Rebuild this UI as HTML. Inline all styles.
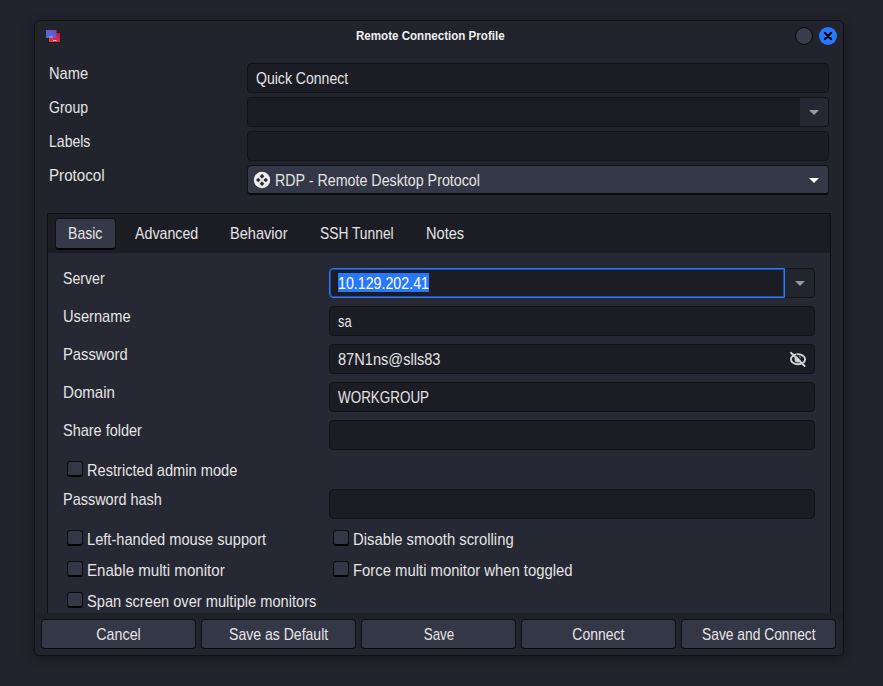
<!DOCTYPE html>
<html><head><meta charset="utf-8">
<style>
*{box-sizing:border-box;margin:0;padding:0}
html,body{width:883px;height:686px;overflow:hidden;background:#22242d;font-family:"Liberation Sans",sans-serif;font-size:15.75px;color:#e6e6e6}
.abs{position:absolute}
#dlg{position:absolute;left:34px;top:20px;width:810px;height:636px;background:#22242d;border:1px solid #101114;border-radius:6px 6px 5px 5px;box-shadow:0 2px 12px 1px rgba(0,0,0,0.32)}
.title{position:absolute;left:0;top:28px;width:883px;text-align:center;font-weight:bold;font-size:12px;color:#f0f0f0}
.lbl{position:absolute;white-space:nowrap;color:#e4e4e4;transform-origin:left center}
.entry{position:absolute;background:#1c1d24;border:1px solid #121317;border-radius:4px}
.combo{position:absolute;background:#343746;border:1px solid #121317;border-bottom:2px solid #08090b;border-radius:4px}
.tri{position:absolute;width:0;height:0;border-left:6px solid transparent;border-right:6px solid transparent;border-top:6px solid #fff}
.btn{position:absolute;top:619px;height:30px;width:155px;background:#343746;border:1px solid #111216;border-bottom-color:#08090a;border-radius:4px;text-align:center;line-height:27px}
.chk{position:absolute;width:16px;height:16px;background:#343746;border:1px solid #0b0c0f;border-bottom:2px solid #030304;border-radius:3px}
</style></head><body>
<div id="dlg"></div>
<!-- title bar -->
<svg class="abs" style="left:44px;top:28px" width="18" height="16" viewBox="0 0 18 16">
<defs><linearGradient id="g1" x1="0" y1="1" x2="1" y2="0"><stop offset="0" stop-color="#3b76fb"/><stop offset="1" stop-color="#8548a8"/></linearGradient>
<linearGradient id="g2" x1="0" y1="1" x2="1" y2="0"><stop offset="0" stop-color="#fb3a3c"/><stop offset="1" stop-color="#c40f4c"/></linearGradient></defs>
<rect x="4.5" y="4.5" width="12" height="10" fill="none" stroke="rgba(0,0,0,0.25)" stroke-width="1"/>
<rect x="5" y="5" width="11" height="9" fill="url(#g2)"/>
<rect x="9" y="12" width="3.5" height="1" fill="#f4d0d8"/>
<rect x="2" y="2" width="10.5" height="8" fill="url(#g1)"/>
<rect x="5.5" y="8.3" width="3" height="1.2" fill="#a8b4e8"/>
</svg>
<div id="t_title" class="title" style="left:356px;width:auto;text-align:left;top:29px;transform:scaleX(0.965);transform-origin:left">Remote Connection Profile</div>
<div class="abs" style="left:795px;top:27px;width:18px;height:18px;border-radius:50%;background:#393c4a;border:1.2px solid #060608"></div>
<div class="abs" style="left:819px;top:27px;width:18px;height:18px;border-radius:50%;background:#2777ff"></div>
<svg class="abs" style="left:819px;top:27px" width="18" height="18" viewBox="0 0 18 18"><path d="M6 6L12 12M12 6L6 12" stroke="#000" stroke-width="2.3" stroke-linecap="round"/></svg>

<!-- top fields -->
<div id="t_name" class="lbl" style="left:49px;top:64px;transform:translateY(0.5px) scaleX(0.931)">Name</div>
<div id="t_group" class="lbl" style="left:49px;top:98px;transform:translateY(0.5px) scaleX(0.891)">Group</div>
<div id="t_labels" class="lbl" style="left:49px;top:132px;transform:translateY(0.5px) scaleX(0.892)">Labels</div>
<div id="t_protocol" class="lbl" style="left:49px;top:166px;transform:translateY(0.5px) scaleX(0.961)">Protocol</div>

<div class="entry" style="left:247px;top:63px;width:582px;height:30px"></div>
<div id="t_quick" class="lbl" style="left:256px;top:69px;transform:translateY(0.5px) scaleX(0.892)">Quick Connect</div>
<div class="entry" style="left:247px;top:97px;width:582px;height:30px;background:#252733"></div>
<div class="abs" style="left:248px;top:98px;width:552px;height:28px;background:#1c1d24;border-radius:3px 0 0 3px"></div>
<div class="tri" style="left:809px;top:110px;border-top-color:#9a9a9a;border-left-width:5px;border-right-width:5px;border-top-width:5px"></div>
<div class="entry" style="left:247px;top:131px;width:582px;height:30px"></div>
<div class="combo" style="left:247px;top:165px;width:582px;height:30px"></div>
<svg class="abs" style="left:253px;top:171px" width="18" height="18" viewBox="0 0 18 18">
<circle cx="9" cy="9" r="8.2" fill="#eeeeee"/>
<g fill="#2c2e38"><rect x="7.30" y="3.60" width="3.40" height="3.40" rx="0.4" transform="rotate(45 9.00 5.30)"/><rect x="7.30" y="11.00" width="3.40" height="3.40" rx="0.4" transform="rotate(45 9.00 12.70)"/><rect x="3.60" y="7.30" width="3.40" height="3.40" rx="0.4" transform="rotate(45 5.30 9.00)"/><rect x="11.00" y="7.30" width="3.40" height="3.40" rx="0.4" transform="rotate(45 12.70 9.00)"/></g>
</svg>
<div id="t_rdp" class="lbl" style="left:275px;top:171px;transform:translateY(0.5px) scaleX(0.905)">RDP - Remote Desktop Protocol</div>
<div class="tri" style="left:809px;top:178px;border-left-width:5px;border-right-width:5px;border-top-width:5px"></div>

<!-- notebook -->
<div class="abs" style="left:47px;top:213px;width:784px;height:400px;background:#262833;border:1px solid #0f1013;border-bottom:none"></div>
<div class="abs" style="left:48px;top:214px;width:782px;height:39px;background:#1c1d24"></div>
<div class="abs" style="left:55px;top:218px;width:61px;height:32px;background:#353847;border-radius:4px;border:1px solid #121317;border-bottom:2px solid #040405"></div>
<div id="t_basic" class="lbl" style="left:68px;top:224px;transform:translateY(0.5px) scaleX(0.893)">Basic</div>
<div id="t_adv" class="lbl" style="left:135px;top:224px;transform:translateY(0.5px) scaleX(0.903)">Advanced</div>
<div id="t_beh" class="lbl" style="left:230px;top:224px;transform:translateY(0.5px) scaleX(0.926)">Behavior</div>
<div id="t_ssh" class="lbl" style="left:320px;top:224px;transform:translateY(0.5px) scaleX(0.876)">SSH Tunnel</div>
<div id="t_notes" class="lbl" style="left:426px;top:224px;transform:translateY(0.5px) scaleX(0.926)">Notes</div>

<div id="t_server" class="lbl" style="left:63px;top:269px;transform:translateY(0.5px) scaleX(0.899)">Server</div>
<div id="t_username" class="lbl" style="left:63px;top:307px;transform:translateY(0.5px) scaleX(0.931)">Username</div>
<div id="t_password" class="lbl" style="left:63px;top:345px;transform:translateY(0.5px) scaleX(0.935)">Password</div>
<div id="t_domain" class="lbl" style="left:63px;top:383px;transform:translateY(0.5px) scaleX(0.958)">Domain</div>
<div id="t_share" class="lbl" style="left:63px;top:421px;transform:translateY(0.5px) scaleX(0.92)">Share folder</div>
<div id="t_phash" class="lbl" style="left:63px;top:490px;transform:translateY(0.5px) scaleX(0.918)">Password hash</div>

<div class="entry" style="left:329px;top:268px;width:486px;height:30px;background:#23252e"></div>
<div class="abs" style="left:329px;top:268px;width:456px;height:30px;background:#1c1d24;border:1px solid #2a7bff;box-shadow:inset 0 0 0 1px rgba(39,119,255,0.55);border-radius:4px 0 0 4px"></div>
<div class="abs" style="left:338px;top:273px;width:91px;height:19px;background:#2777ff"></div>
<div id="t_ip" class="lbl" style="left:338px;top:274px;color:#fff;transform:translateY(0.5px) scaleX(0.903)">10.129.202.41</div>
<div class="tri" style="left:795px;top:281px;border-top-color:#9a9a9a;border-left-width:5px;border-right-width:5px;border-top-width:5px"></div>

<div class="entry" style="left:329px;top:306px;width:486px;height:30px"></div>
<div id="t_sa" class="lbl" style="left:338px;top:312px;transform:translateY(0.5px) scaleX(0.818)">sa</div>
<div class="entry" style="left:329px;top:344px;width:486px;height:30px"></div>
<div id="t_pw" class="lbl" style="left:338px;top:350px;transform:translateY(0.5px) scaleX(0.927)">87N1ns@slls83</div>
<svg class="abs" style="left:789px;top:350px" width="18" height="18" viewBox="0 0 18 18">
<ellipse cx="9" cy="9.2" rx="7.1" ry="5" fill="none" stroke="#d2d2d2" stroke-width="1.9"/>
<circle cx="8.8" cy="9.3" r="3.2" fill="#d2d2d2"/>
<path d="M7.2 4.8L13.4 11" stroke="#1c1d24" stroke-width="1.5"/>
<path d="M2 2.8L15.6 16" stroke="#d2d2d2" stroke-width="1.9" stroke-linecap="round"/>
</svg>
<div class="entry" style="left:329px;top:382px;width:486px;height:30px"></div>
<div id="t_wg" class="lbl" style="left:338px;top:388px;transform:translateY(0.5px) scaleX(0.853)">WORKGROUP</div>
<div class="entry" style="left:329px;top:420px;width:486px;height:30px"></div>

<div class="chk" style="left:67px;top:461px"></div>
<div id="t_restricted" class="lbl" style="left:87px;top:461px;transform:translateY(0.5px) scaleX(0.928)">Restricted admin mode</div>
<div class="entry" style="left:329px;top:489px;width:486px;height:30px"></div>

<div class="chk" style="left:67px;top:530px"></div>
<div id="t_left" class="lbl" style="left:87px;top:530px;transform:translateY(0.5px) scaleX(0.93)">Left-handed mouse support</div>
<div class="chk" style="left:333px;top:530px"></div>
<div id="t_disable" class="lbl" style="left:353px;top:530px;transform:translateY(0.5px) scaleX(0.941)">Disable smooth scrolling</div>
<div class="chk" style="left:67px;top:561px"></div>
<div id="t_enable" class="lbl" style="left:87px;top:561px;transform:translateY(0.5px) scaleX(0.959)">Enable multi monitor</div>
<div class="chk" style="left:333px;top:561px"></div>
<div id="t_force" class="lbl" style="left:353px;top:561px;transform:translateY(0.5px) scaleX(0.943)">Force multi monitor when toggled</div>
<div class="chk" style="left:67px;top:592px"></div>
<div id="t_span" class="lbl" style="left:87px;top:592px;transform:translateY(0.5px) scaleX(0.929)">Span screen over multiple monitors</div>

<!-- buttons -->
<div class="abs" style="left:35px;top:613px;width:808px;height:6px;background:#202229"></div>
<div class="btn" style="left:41px"><span id="t_cancel" style="display:inline-block;transform:translateY(0.5px) scaleX(0.907)">Cancel</span></div>
<div class="btn" style="left:201px"><span id="t_sad" style="display:inline-block;transform:translateY(0.5px) scaleX(0.892)">Save as Default</span></div>
<div class="btn" style="left:361px"><span id="t_save" style="display:inline-block;transform:translateY(0.5px) scaleX(0.849)">Save</span></div>
<div class="btn" style="left:521px"><span id="t_connect" style="display:inline-block;transform:translateY(0.5px) scaleX(0.886)">Connect</span></div>
<div class="btn" style="left:681px"><span id="t_sac" style="display:inline-block;transform:translateY(0.5px) scaleX(0.876)">Save and Connect</span></div>
</body></html>
